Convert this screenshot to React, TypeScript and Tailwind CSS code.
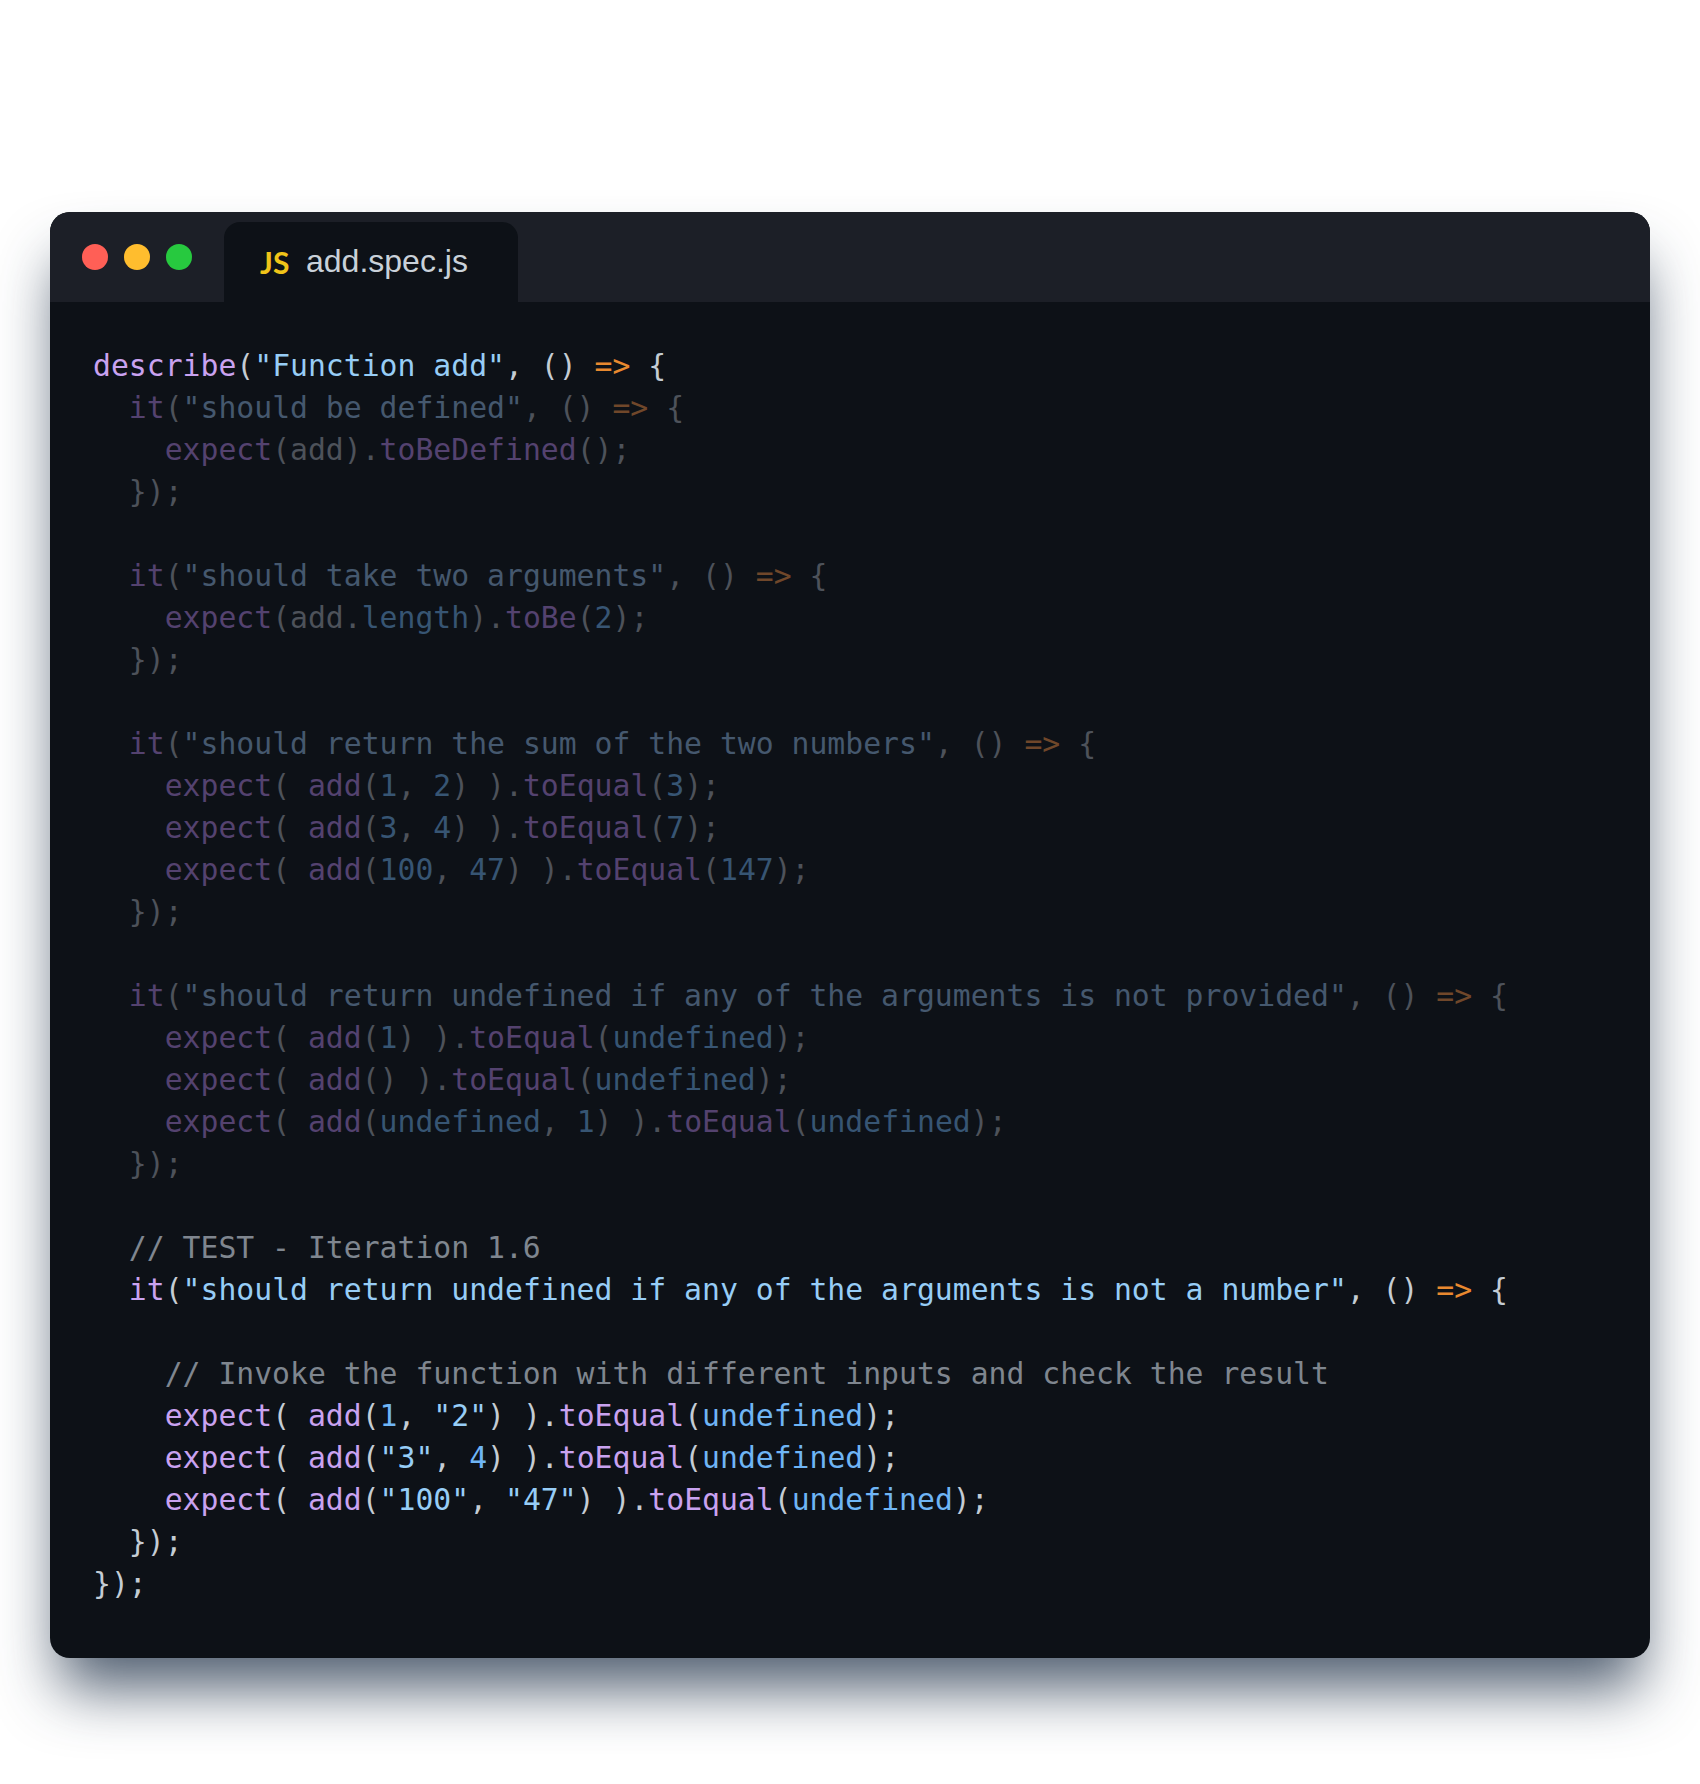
type Kind = 'fn' | 'str' | 'num' | 'pun' | 'arrow' | 'com';
type Token = [Kind, string];

// colours for the lines in focus
const bright: Record<Kind, string> = {
  fn: 'text-[#c9a2f0]',
  str: 'text-[#97cdf6]',
  num: 'text-[#6fb5f5]',
  pun: 'text-[#c4ccd4]',
  arrow: 'text-[#e8892f]',
  com: 'text-[#7f868f]',
};

// same tokens, faded
const dim: Record<Kind, string> = {
  fn: 'text-[#54426f]',
  str: 'text-[#45586e]',
  num: 'text-[#375573]',
  pun: 'text-[#4d525a]',
  arrow: 'text-[#70472a]',
  com: 'text-[#7f868f]',
};

const blank: Token[] = [];

const close = (indent: string): Token[] => [['pun', indent + '});']];

const itLine = (title: string): Token[] => [
  ['fn', '  it'],
  ['pun', '('],
  ['str', `"${title}"`],
  ['pun', ', () '],
  ['arrow', '=>'],
  ['pun', ' {'],
];

const expectLine = (args: Token[], matcher: string, value: Token): Token[] => [
  ['fn', '    expect'],
  ['pun', '( '],
  ['fn', 'add'],
  ['pun', '('],
  ...args,
  ['pun', ') ).'],
  ['fn', matcher],
  ['pun', '('],
  value,
  ['pun', ');'],
];

const lines: { tokens: Token[]; faded?: boolean }[] = [
  {
    tokens: [
      ['fn', 'describe'],
      ['pun', '('],
      ['str', '"Function add"'],
      ['pun', ', () '],
      ['arrow', '=>'],
      ['pun', ' {'],
    ],
  },
  { faded: true, tokens: itLine('should be defined') },
  {
    faded: true,
    tokens: [
      ['fn', '    expect'],
      ['pun', '(add).'],
      ['fn', 'toBeDefined'],
      ['pun', '();'],
    ],
  },
  { faded: true, tokens: close('  ') },
  { tokens: blank },
  { faded: true, tokens: itLine('should take two arguments') },
  {
    faded: true,
    tokens: [
      ['fn', '    expect'],
      ['pun', '(add.'],
      ['num', 'length'],
      ['pun', ').'],
      ['fn', 'toBe'],
      ['pun', '('],
      ['num', '2'],
      ['pun', ');'],
    ],
  },
  { faded: true, tokens: close('  ') },
  { tokens: blank },
  { faded: true, tokens: itLine('should return the sum of the two numbers') },
  { faded: true, tokens: expectLine([['num', '1'], ['pun', ', '], ['num', '2']], 'toEqual', ['num', '3']) },
  { faded: true, tokens: expectLine([['num', '3'], ['pun', ', '], ['num', '4']], 'toEqual', ['num', '7']) },
  { faded: true, tokens: expectLine([['num', '100'], ['pun', ', '], ['num', '47']], 'toEqual', ['num', '147']) },
  { faded: true, tokens: close('  ') },
  { tokens: blank },
  { faded: true, tokens: itLine('should return undefined if any of the arguments is not provided') },
  { faded: true, tokens: expectLine([['num', '1']], 'toEqual', ['num', 'undefined']) },
  { faded: true, tokens: expectLine([], 'toEqual', ['num', 'undefined']) },
  { faded: true, tokens: expectLine([['num', 'undefined'], ['pun', ', '], ['num', '1']], 'toEqual', ['num', 'undefined']) },
  { faded: true, tokens: close('  ') },
  { tokens: blank },
  { tokens: [['com', '  // TEST - Iteration 1.6']] },
  { tokens: itLine('should return undefined if any of the arguments is not a number') },
  { tokens: blank },
  { tokens: [['com', '    // Invoke the function with different inputs and check the result']] },
  { tokens: expectLine([['num', '1'], ['pun', ', '], ['str', '"2"']], 'toEqual', ['num', 'undefined']) },
  { tokens: expectLine([['str', '"3"'], ['pun', ', '], ['num', '4']], 'toEqual', ['num', 'undefined']) },
  { tokens: expectLine([['str', '"100"'], ['pun', ', '], ['str', '"47"']], 'toEqual', ['num', 'undefined']) },
  { tokens: close('  ') },
  { tokens: close('') },
];

export default function App() {
  return (
    <div className="h-[1784px] w-[1700px] overflow-hidden bg-white pt-[212px] pl-[50px]">
      <div className="h-[1446px] w-[1600px] overflow-hidden rounded-[20px] bg-[#0d1117] shadow-[0_40px_60px_-10px_rgba(30,48,70,0.78)]">
        {/* title bar */}
        <div className="flex h-[90px] bg-[#1c1f27]">
          <div className="flex h-[90px] items-center gap-4 pl-8 pr-[32px]">
            <span className="h-[26px] w-[26px] rounded-full bg-[#ff5f56]" />
            <span className="h-[26px] w-[26px] rounded-full bg-[#ffbd2e]" />
            <span className="h-[26px] w-[26px] rounded-full bg-[#27c93f]" />
          </div>
          <div className="mt-[10px] flex h-[80px] w-[294px] items-center rounded-t-[16px] bg-[#0d1117] pl-[36px]">
            <span className="w-[40px] font-['Lato',sans-serif] text-[30px] font-bold text-[#f0c419]">JS</span>
            <span className="mb-[2px] ml-[6px] font-['Liberation_Sans',sans-serif] text-[32px] text-[#c9d1d9]">add.spec.js</span>
          </div>
        </div>
        {/* code */}
        <div className="pt-[43px] pl-[43px] font-['DejaVu_Sans_Mono',monospace] text-[29.75px] leading-[42px] whitespace-pre">
          {lines.map((line, i) => (
            <div key={i} className="h-[42px]">
              {line.tokens.map(([kind, text], j) => (
                <span key={j} className={line.faded ? dim[kind] : bright[kind]}>
                  {text}
                </span>
              ))}
            </div>
          ))}
        </div>
      </div>
    </div>
  );
}
